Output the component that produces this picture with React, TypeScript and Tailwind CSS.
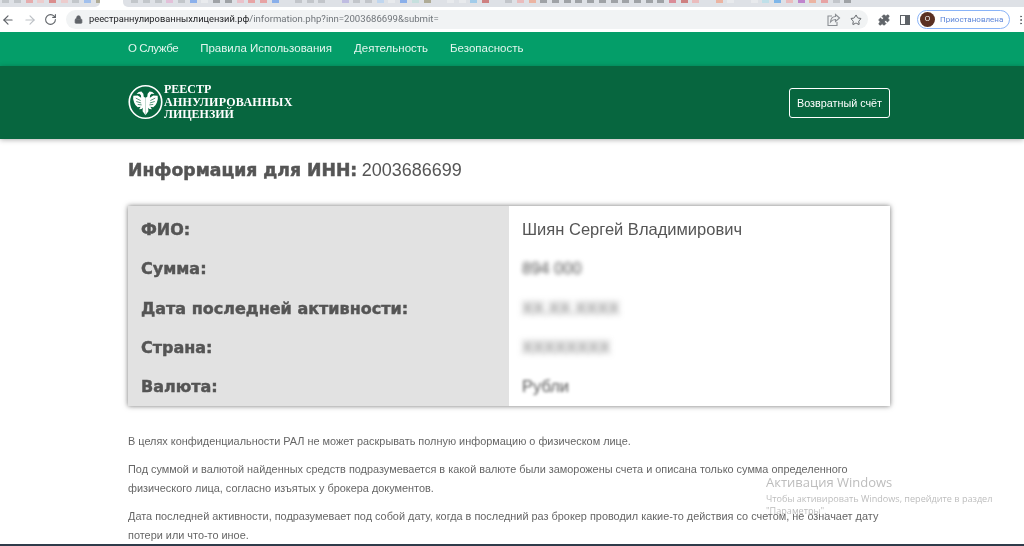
import React from 'react';
import { ArrowLeft, ArrowRight, RotateCw, Lock, Star, Puzzle, MoreVertical } from 'lucide-react';

const navLinks = [
  { name: 'О Службе', tracking: 'tracking-[-0.45px]' },
  { name: 'Правила Использования', tracking: '' },
  { name: 'Деятельность', tracking: '' },
  { name: 'Безопасность', tracking: '' },
];

const rows = [
  { label: 'ФИО:', value: 'Шиян Сергей Владимирович', blur: '' },
  { label: 'Сумма:', value: '894 000', blur: 'blur-[2px]' },
  { label: 'Дата последней активности:', value: 'XX.XX.XXXX', blur: 'blur-[3px]' },
  { label: 'Страна:', value: 'XXXXXXXX', blur: 'blur-[3px]' },
  { label: 'Валюта:', value: 'Рубли', blur: 'blur-[1.5px]' },
];

// favicons of the squeezed tabs, just a sliver of each is visible
const g = '#b9bcc1';
const l = '#eceef0';
const d = '#8a8d91';
const leftTabs = [g, g, '#e89a9a', '#f0c4c4', '#d9706f', '#f0c4c4', g, '#8db4ef', '#a09a7c'];
const rightTabs = [
  g, g, g, '#e5b5d5', g, '#6f9fec', l, d, d, '#eeb6c0', '#ea8f8f', '#ea8f8f', '#6f9fec', 'transparent', g, g, g, 'transparent', '#b5b0e0',
  g, g, '#b6d3f2', l, '#6f9fec', '#bfe0dc', '#a09a7c', 'transparent', l, l, '#8fc6ec', '#c9605f', 'transparent', g, '#eeb0b0', '#f0a58c',
  d, d, d, d, d, d, d, d, d, d, d, '#d9707f', '#c9605f', '#eeb0b0', 'transparent', '#f0a58c', l, 'transparent', l, '#b6e0ea', '#5fa8ea',
  '#eeb0b0', '#b565c5', '#f0a58c', '#ea8f8f', g, d,
];

const Favicons = ({ colors }: { colors: string[] }) => (
  <div className="flex opacity-75">
    {colors.map((color, i) => (
      <div key={i} className="w-[11.7px] shrink-0 flex justify-center">
        <div className="w-[7px] h-[3px]" style={{ backgroundColor: color }} />
      </div>
    ))}
  </div>
);

const Eagle = () => {
  const half =
    'M18 13.500L16.200 12.500L15.800 9.500L13.800 7.200L11 7.600L8.800 9.800L11.800 9.600L13.300 11L13.500 13.500L10 11.200L5.500 11.500L5.300 15L6.300 18.500L7.600 21L10 23.300L13 23L11.400 25.500L14 25.200L15.200 24L15 27.500L18 31.500Z';
  return (
    <svg width="35" height="36" viewBox="0 0 36 36" className="shrink-0">
      <circle cx="18" cy="18" r="16.700" fill="none" stroke="#fff" strokeWidth="1.700" />
      <path d={half} fill="#fff" />
      <path d={half} fill="#fff" transform="matrix(-1 0 0 1 36 0)" />
      <path d="M8 14l5 2.500M8.500 17.500l5 1.500M10 20.500l4 .5M28 14l-5 2.500M27.500 17.500l-5 1.500M26 20.500l-4 .5" stroke="#07663f" strokeWidth=".7" />
    </svg>
  );
};

const ShareIcon = () => (
  <svg width="15" height="14" viewBox="0 0 15 14" fill="none" stroke="#8b8f94" strokeWidth="1.100">
    <path d="M6 3H2v9.500h9V9" />
    <path d="M13.500 5L9.500 1.500V3.500C6.500 3.500 4.800 5.500 4.500 9C6 7 7.500 6.500 9.500 6.500V8.500z" />
  </svg>
);

export default function App() {
  return (
    <div className="w-[1024px] h-[546px] overflow-hidden relative bg-white font-['Liberation_Sans',Arial,sans-serif] text-[#555] blur-[0.35px]">
      {/* browser chrome */}
      <div className="h-[7px] flex items-start bg-white">
        <div className="w-[100px] h-[7px] bg-[#dee1e6] rounded-br-[5px] overflow-hidden">
          <Favicons colors={leftTabs} />
        </div>
        <div className="w-[23px]" />
        <div className="flex-1 h-[7px] bg-[#dee1e6] rounded-bl-[5px] overflow-hidden pl-[6px]">
          <Favicons colors={rightTabs} />
        </div>
      </div>
      <div className="h-[25px] bg-white flex items-center overflow-hidden">
        <ArrowLeft size={14} className="shrink-0 ml-[1px] text-[#5f6368]" />
        <ArrowRight size={14} className="shrink-0 ml-[8px] text-[#bdc1c6]" />
        <RotateCw size={13} className="shrink-0 ml-[7px] text-[#5f6368]" />
        <div className="shrink-0 ml-[9px] w-[802px] h-[19px] rounded-full bg-[#f1f3f4] flex items-center pl-[8px]">
          <Lock size={9} fill="#5f6368" className="text-[#5f6368]" />
          <span className="ml-[6px] font-['Roboto',sans-serif] text-[9.3px] text-[#202124] whitespace-nowrap">
            реестраннулированныхлицензий.рф<span className="text-[9.6px] text-[#70757a]">/information.php?inn=2003686699&amp;submit=</span>
          </span>
          <div className="ml-auto flex items-center gap-[9px] pr-[6px]">
            <ShareIcon />
            <Star size={12} className="text-[#5f6368]" />
          </div>
        </div>
        <Puzzle size={12} fill="#5f6368" className="shrink-0 ml-[10px] text-[#5f6368]" />
        <div className="shrink-0 ml-[10px] w-[10px] h-[10px] border-[1.5px] border-[#5f6368] flex justify-end">
          <div className="w-[4px] bg-[#5f6368]" />
        </div>
        <div className="shrink-0 ml-[7px] w-[93px] h-[19px] rounded-full border border-[#8ab4f8] flex items-center pl-[2px]">
          <div className="w-[15px] h-[15px] rounded-full bg-[#5a3022] text-white text-[7px] flex items-center justify-center">О</div>
          <span className="ml-[5px] font-['Roboto',sans-serif] text-[8px] text-[#5b84d8] whitespace-nowrap">Приостановлена</span>
        </div>
        <MoreVertical size={12} className="shrink-0 ml-[5px] text-[#5f6368]" />
      </div>

      {/* site nav */}
      <div className="h-[34px] bg-[#049e69] flex items-center pl-[128px] gap-[22px]">
        {navLinks.map((link) => (
          <a key={link.name} className={`text-[11.5px] text-[#e3f5ee] whitespace-nowrap ${link.tracking}`}>
            {link.name}
          </a>
        ))}
      </div>

      {/* header */}
      <div className="h-[73px] bg-[#07663f] flex items-center justify-between pl-[128px] pr-[134px] shadow-[0_1px_5px_rgba(0,0,0,0.3)] relative">
        <div className="flex items-center gap-[1px] -mt-[2px]">
          <Eagle />
          <div className="pt-[1px] font-['Liberation_Serif',serif] font-bold text-[12px] leading-[12.5px] text-white">
            <div>РЕЕСТР</div>
            <div className="tracking-[0.3px]">АННУЛИРОВАННЫХ</div>
            <div>ЛИЦЕНЗИЙ</div>
          </div>
        </div>
        <button className="w-[101px] h-[30px] mt-[1px] border border-white rounded-[3px] text-[10.8px] text-white">Возвратный счёт</button>
      </div>

      {/* content */}
      <div className="pl-[128px] w-[890px]">
        <h1 className="mt-[19px] leading-[24px] whitespace-nowrap">
          <span className="text-[17.25px] font-bold font-['DejaVu_Sans',sans-serif] [-webkit-text-stroke:0.5px_#555]">Информация для ИНН:</span>{' '}
          <span className="text-[18px]">2003686699</span>
        </h1>

        <div className="mt-[23px] grid grid-cols-[381px_381px] shadow-[0_0_5px_rgba(0,0,0,0.55)] h-[200px]">
          <div className="bg-[#e2e2e2] flex flex-col justify-between pt-[14px] pb-[9px] pl-[13px]">
            {rows.map((row) => (
              <div key={row.label} className="font-bold font-['DejaVu_Sans',sans-serif] text-[16px] leading-[20px] [-webkit-text-stroke:0.45px_#555] whitespace-nowrap">
                {row.label}
              </div>
            ))}
          </div>
          <div className="bg-white flex flex-col justify-between pt-[13px] pb-[10px] pl-[13px]">
            {rows.map((row) => (
              <div key={row.label} className={`text-[16.5px] leading-[20px] whitespace-nowrap ${row.blur}`}>
                {row.value}
              </div>
            ))}
          </div>
        </div>

        <div className="mt-[26px] text-[10.9px] leading-[19px] text-[#666] w-[824px]">
          <p>В целях конфиденциальности РАЛ не может раскрывать полную информацию о физическом лице.</p>
          <p className="mt-[9px]">
            Под суммой и валютой найденных средств подразумевается в какой валюте были заморожены счета и описана только сумма определенного
            <br />
            физического лица, согласно изъятых у брокера документов.
          </p>
          <p className="mt-[9px]">
            Дата последней активности, подразумевает под собой дату, когда в последний раз брокер проводил какие-то действия со счетом, не означает дату
            <br />
            потери или что-то иное.
          </p>
        </div>
      </div>

      {/* windows watermark */}
      <div className="absolute left-[766px] top-[473px] font-['Open_Sans',sans-serif] text-[#bdbdbd] whitespace-nowrap">
        <div className="text-[13px] leading-[18px]">Активация Windows</div>
        <div className="text-[9.1px] leading-[12px] mt-[2px]">Чтобы активировать Windows, перейдите в раздел</div>
        <div className="text-[9.1px] leading-[11px]">"Параметры".</div>
      </div>

      <div className="absolute left-0 right-0 bottom-0 h-[2px] bg-[#2f3b4a]" />
    </div>
  );
}
